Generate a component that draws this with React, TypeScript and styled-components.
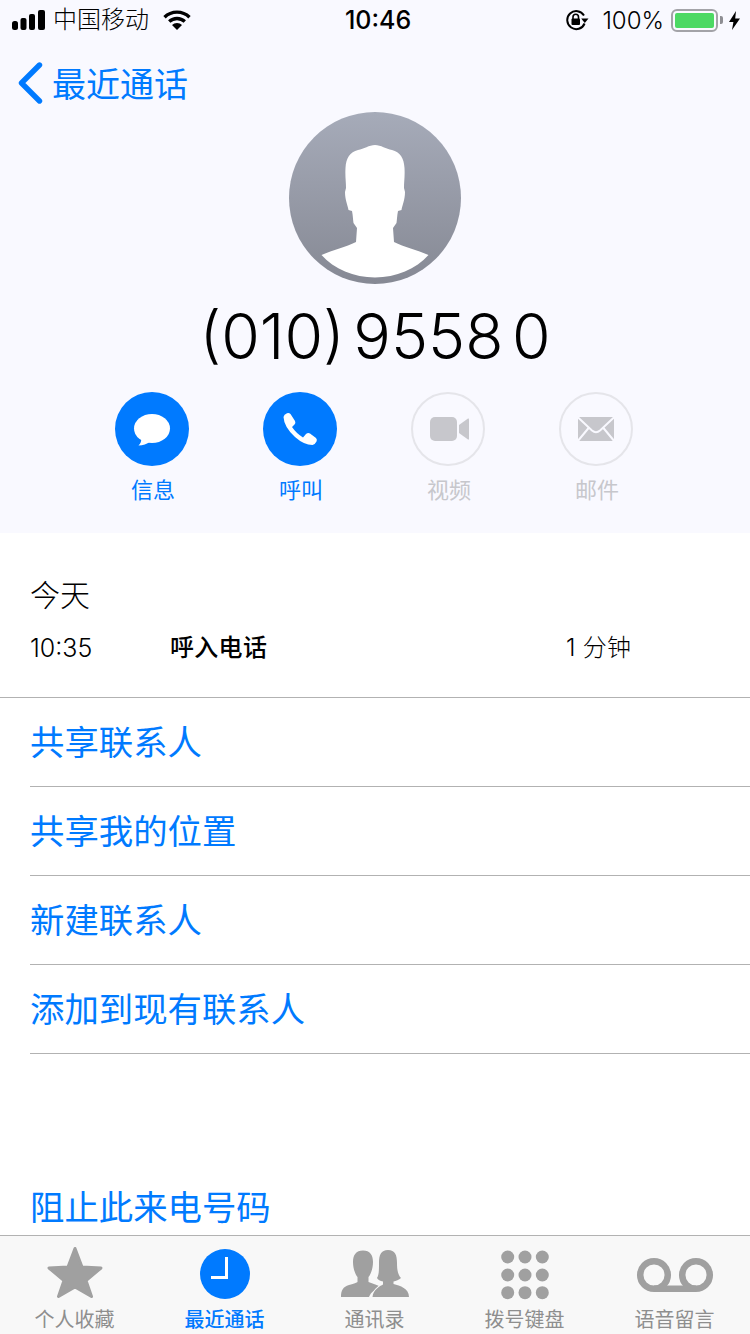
import React from 'react';
import styled, { createGlobalStyle } from 'styled-components';

const Global = createGlobalStyle`
  html, body { margin: 0; padding: 0; background: #fff; }
  body { font-family: Inter, "Noto Sans CJK SC", "Noto Sans", sans-serif; }
  * { box-sizing: border-box; }
`;

const BLUE = '#007aff';
const ICON_GREY = '#a0a0a0';

const Screen = styled.div`
  width: 750px;
  height: 1334px;
  display: flex;
  flex-direction: column;
  overflow: hidden;
  background: #fff;
  color: #000;
`;
const Main = styled.main`
  flex: 1;
  min-height: 0;
  overflow: hidden;
`;
const Header = styled.header`
  height: 533px;
  background: #f9f9ff;
  display: flex;
  flex-direction: column;
`;
const StatusBar = styled.div`
  height: 40px;
  display: grid;
  grid-template-columns: 1fr auto 1fr;
  align-items: center;
  padding: 0 10px 0 12px;
`;
const StatusLeft = styled.div`
  display: flex;
  align-items: center;
  gap: 8px;
  font-size: 24px;
  font-weight: 300;
`;
const Carrier = styled.span`
  margin-right: 6px;
  line-height: 40px;
`;
const Clock = styled.div`
  font-size: 25px;
  font-weight: 500;
  padding-left: 4px;
`;
const StatusRight = styled.div`
  display: flex;
  align-items: center;
  justify-content: flex-end;
  font-size: 24px;
  font-weight: 300;
`;
const Percent = styled.span`
  margin: 0 7px 0 13px;
`;
const Battery = styled.div`
  width: 47px;
  height: 23px;
  border: 2px solid #a3a3a8;
  border-radius: 6px;
  padding: 2px;
  display: flex;
`;
const BatteryFill = styled.div`
  flex: 1;
  background: #4cd964;
  border-radius: 2px;
`;
const BatteryNub = styled.div`
  width: 3px;
  height: 8px;
  background: #8e8e93;
  border-radius: 0 2px 2px 0;
  margin: 0 6px 0 2px;
`;
const NavBar = styled.div`
  height: 72px;
  padding: 13px 0 0 18px;
  display: flex;
  align-items: center;
  gap: 9px;
  color: ${BLUE};
  font-size: 34px;
  font-weight: 400;
`;
const Avatar = styled.div`
  display: flex;
  justify-content: center;
  height: 172px;
`;
const Phone = styled.h1`
  margin: 7px 0 0;
  text-align: center;
  font-size: 62.5px;
  line-height: 90px;
  font-weight: 300;
  word-spacing: -9px;
`;
const Actions = styled.div`
  margin-top: 11px;
  padding-right: 2px;
  display: flex;
  justify-content: center;
  gap: 74px;
`;
const Action = styled.div<{ $on?: boolean }>`
  width: 74px;
  display: flex;
  flex-direction: column;
  align-items: center;
  font-size: 22px;
  font-weight: 400;
  line-height: 32px;
  white-space: nowrap;
  color: ${(p) => (p.$on ? BLUE : '#c7c7cc')};
`;
const ActionLabel = styled.span`
  margin-left: 2px;
`;
const ActionCircle = styled.div<{ $on?: boolean }>`
  width: 74px;
  height: 74px;
  border-radius: 50%;
  background: ${(p) => (p.$on ? BLUE : 'transparent')};
  border: ${(p) => (p.$on ? 'none' : '2px solid #e5e5ea')};
  margin-bottom: 8px;
  display: flex;
  align-items: center;
  justify-content: center;
`;
const History = styled.section`
  height: 165px;
  padding: 41px 30px 0;
  border-bottom: 1px solid #b2b2b2;
`;
const Day = styled.div`
  font-size: 30px;
  line-height: 42px;
  font-weight: 300;
`;
const CallRow = styled.div`
  margin-top: 17px;
  display: grid;
  grid-template-columns: 140px 396px auto;
  font-size: 24px;
  line-height: 30px;
  font-weight: 300;
`;
const CallTime = styled.span`
  font-size: 25px;
`;
const CallType = styled.span`
  font-weight: 500;
  letter-spacing: 0.3px;
`;
const Duration = styled.span`
  letter-spacing: 0.3px;
`;
const Rows = styled.ul`
  list-style: none;
  margin: 0;
  padding: 0 0 0 30px;
`;
const Row = styled.li`
  height: 89px;
  border-bottom: 1px solid #b2b2b2;
  color: ${BLUE};
  font-size: 34.4px;
  font-weight: 400;
  display: flex;
  align-items: center;
  padding-bottom: 4px;
`;
const Block = styled.div`
  margin-top: 129px;
  padding-left: 30px;
  color: ${BLUE};
  font-size: 34.4px;
  font-weight: 400;
  line-height: 50px;
`;
const TabBar = styled.nav`
  height: 99px;
  flex: none;
  background: #f8f8f8;
  border-top: 1px solid #b2b2b2;
  display: grid;
  grid-template-columns: repeat(5, 150px);
`;
const Tab = styled.div<{ $on?: boolean }>`
  display: flex;
  flex-direction: column;
  align-items: center;
  color: ${(p) => (p.$on ? BLUE : '#8e8e8e')};
  font-size: 20px;
  font-weight: ${(p) => (p.$on ? 500 : 400)};
  line-height: 28px;
`;
const TabLabel = styled.span`
  margin-right: 1px;
`;
const TabIcon = styled.svg`
  display: block;
  width: 90px;
  height: 70px;
`;

const Signal = () => (
  <svg width="33" height="20" viewBox="0 0 33 20" fill="#000">
    <rect x="0" y="11" width="6" height="9" rx="2.5" />
    <rect x="8.5" y="8" width="6" height="12" rx="2" />
    <rect x="17" y="4" width="6" height="16" rx="2" />
    <rect x="26" y="0" width="7" height="20" rx="2" />
  </svg>
);
const Wifi = () => (
  <svg width="28" height="20" viewBox="0 0 28 20" fill="none" stroke="#000" strokeWidth="3.4">
    <path d="M1.5 7.2 A18 18 0 0 1 26.5 7.2" />
    <path d="M6.2 11.6 A11.5 11.5 0 0 1 21.8 11.6" />
    <path d="M14 20 L9 15 A7 7 0 0 1 19 15 Z" fill="#000" stroke="none" />
  </svg>
);
const OrientationLock = () => (
  <svg width="24" height="22" viewBox="0 0 24 22">
    <path d="M19.6 14.5 A9 9 0 1 1 19 6.5" fill="none" stroke="#000" strokeWidth="2" />
    <path d="M16.2 9.5 L23.5 9.5 L19.8 14 Z" fill="#000" />
    <rect x="6.5" y="9.5" width="8.5" height="6.5" rx="1" fill="#000" />
    <path d="M8 10 V8 A2.7 2.7 0 0 1 13.5 8 V10" fill="none" stroke="#000" strokeWidth="1.6" />
  </svg>
);
const Bolt = () => (
  <svg width="11" height="19" viewBox="0 0 11 19" fill="#000">
    <path d="M7 0 L0 11 L4.4 11 L3 19 L11 7.5 L6.2 7.5 Z" />
  </svg>
);
const Back = () => (
  <svg width="25" height="42" viewBox="0 0 25 42" fill="none" stroke={BLUE} strokeWidth="5.4" strokeLinecap="round" strokeLinejoin="round">
    <path d="M21.5 3 L3.5 21 L21.5 39" />
  </svg>
);
const Person = () => (
  <svg width="172" height="172" viewBox="0 0 172 172">
    <defs>
      <linearGradient id="av" x1="0" y1="0" x2="0" y2="1">
        <stop offset="0" stopColor="#a6abb9" />
        <stop offset="1" stopColor="#868994" />
      </linearGradient>
    </defs>
    <circle cx="86" cy="86" r="86" fill="url(#av)" />
    <path
      fill="#fff"
      d="M86 33 C92 33 97 37 103 38 C111 40 115 46 115.500 56 C116 64 115 70 115 76 L116 80 C116 88 113 94 112.500 98 L109 99 C108 104 108 108 107.500 111 L104 116 L105 130 C115 135 128 138 139.500 143 C127 157 107 165.500 86 165.500 C65 165.500 45 157 32.500 143 C44 138 57 135 67 130 L68 116 L64.500 111 C64 108 64 104 63 99 L59.500 98 C59 94 56 88 56 80 L57 76 C57 70 56 64 56.500 56 C57 46 61 40 69 38 C75 37 80 33 86 33 Z"
    />
  </svg>
);
const Bubble = () => (
  <svg width="74" height="74" viewBox="0 0 74 74" fill="#fff">
    <ellipse cx="37" cy="36.500" rx="18" ry="14.500" />
    <path d="M26.500 45 C26.500 49 25.500 52 23.500 53.500 C28 53.500 32 52 35 49.500 Z" />
  </svg>
);
const Handset = () => (
  <svg width="74" height="74" viewBox="0 0 74 74" fill="#fff">
    <path d="M20.500 25 Q21 22.500 24 21.300 Q26 20.600 27.500 22 L32 29 Q33 31 31.500 32.500 L29 35 Q33 41 40 45.500 L43 42 Q45 40.500 47 41.500 L53 46 Q54.500 47.500 53.500 49.500 Q52 52.500 49.500 53 Q41 53 32 45 Q21 35 20.500 25 Z" />
  </svg>
);
const Video = () => (
  <svg width="70" height="70" viewBox="2 2 70 70" fill="#c7c7cc">
    <rect x="19" y="25" width="27" height="24" rx="5" />
    <path d="M48 33 L57 26.500 Q58 26 58 27.500 V46.500 Q58 48 57 47.500 L48 41 Z" />
  </svg>
);
const Mail = () => (
  <svg width="70" height="70" viewBox="2 2 70 70">
    <rect x="19" y="25" width="36" height="24" fill="#c7c7cc" />
    <path d="M17.500 24 L33 38.500 Q37 42 41 38.500 L56.500 24" fill="none" stroke="#f9f9ff" strokeWidth="2" />
    <path d="M18 50 L30 35.500 M56 50 L44 35.500" fill="none" stroke="#f9f9ff" strokeWidth="2" />
  </svg>
);

const StarIcon = () => (
  <TabIcon viewBox="0 0 90 70">
    <path
      fill={ICON_GREY}
      stroke={ICON_GREY}
      strokeWidth="3"
      strokeLinejoin="round"
      d="M45 12.500 L52 31 L71 32 L56 44.500 L61.500 60.500 L45 51 L28.500 60.500 L34 44.500 L19 32 L38 31 Z"
    />
  </TabIcon>
);
const ClockIcon = () => (
  <TabIcon viewBox="0 0 90 70">
    <circle cx="45" cy="38" r="25" fill={BLUE} />
    <path d="M46.500 21 V41.500 H31" fill="none" stroke="#fff" strokeWidth="3" />
  </TabIcon>
);
const ContactsIcon = () => (
  <TabIcon viewBox="0 0 90 70">
    <path
      fill={ICON_GREY}
      d="M33 14.500 C40 14.500 43 19 43 26 C43 32 41 38 38.500 41 L38.500 46 C43 48 48 49 51 51 C45 53 41 56 39 61 L11 61 C11 54 13 51 19 49 C23 48 26 47 27.500 46 L27.500 41 C25 38 23 32 23 26 C23 19 26 14.500 33 14.500 Z"
    />
    <path
      fill={ICON_GREY}
      stroke="#f8f8f8"
      strokeWidth="2"
      paintOrder="stroke"
      d="M58 14 C65 14 67 19 67 27 C67 34 68 39 71 42 C69 44 66 45 63.500 45.500 L63.500 48 C70 50 79 52 79 61 L42.500 61 C43 54 50 50 53 48.500 L53 45.500 C50 45 48 44 47 42 C49 39 49 34 49 27 C49 19 51 14 58 14 Z"
    />
  </TabIcon>
);
const KeypadIcon = () => (
  <TabIcon viewBox="0 0 90 70">
    {[27.700, 45, 62.300].flatMap((x) =>
      [21, 39, 56.700].map((y) => <circle key={`${x}-${y}`} cx={x} cy={y} r="6.500" fill={ICON_GREY} />)
    )}
  </TabIcon>
);
const VoicemailIcon = () => (
  <TabIcon viewBox="0 0 90 70">
    <g fill="none" stroke={ICON_GREY} strokeWidth="6.500">
      <circle cx="24" cy="39" r="13.800" />
      <circle cx="66" cy="39" r="13.800" />
      <path d="M24 52.800 H66" />
    </g>
  </TabIcon>
);

const actions = [
  { label: '信息', on: true, icon: <Bubble /> },
  { label: '呼叫', on: true, icon: <Handset /> },
  { label: '视频', on: false, icon: <Video /> },
  { label: '邮件', on: false, icon: <Mail /> },
];
const rows = ['共享联系人', '共享我的位置', '新建联系人', '添加到现有联系人'];
const tabs = [
  { label: '个人收藏', icon: <StarIcon /> },
  { label: '最近通话', icon: <ClockIcon />, on: true },
  { label: '通讯录', icon: <ContactsIcon /> },
  { label: '拨号键盘', icon: <KeypadIcon /> },
  { label: '语音留言', icon: <VoicemailIcon /> },
];

export default function App() {
  return (
    <Screen>
      <Global />
      <Main>
        <Header>
          <StatusBar>
            <StatusLeft>
              <Signal />
              <Carrier>中国移动</Carrier>
              <Wifi />
            </StatusLeft>
            <Clock>10:46</Clock>
            <StatusRight>
              <OrientationLock />
              <Percent>100%</Percent>
              <Battery>
                <BatteryFill />
              </Battery>
              <BatteryNub />
              <Bolt />
            </StatusRight>
          </StatusBar>
          <NavBar>
            <Back />
            最近通话
          </NavBar>
          <Avatar>
            <Person />
          </Avatar>
          <Phone>(010) 9558 0</Phone>
          <Actions>
            {actions.map((a) => (
              <Action key={a.label} $on={a.on}>
                <ActionCircle $on={a.on}>{a.icon}</ActionCircle>
                <ActionLabel>{a.label}</ActionLabel>
              </Action>
            ))}
          </Actions>
        </Header>
        <History>
          <Day>今天</Day>
          <CallRow>
            <CallTime>10:35</CallTime>
            <CallType>呼入电话</CallType>
            <Duration>1 分钟</Duration>
          </CallRow>
        </History>
        <Rows>
          {rows.map((r) => (
            <Row key={r}>{r}</Row>
          ))}
        </Rows>
        <Block>阻止此来电号码</Block>
      </Main>
      <TabBar>
        {tabs.map((t) => (
          <Tab key={t.label} $on={t.on}>
            {t.icon}
            <TabLabel>{t.label}</TabLabel>
          </Tab>
        ))}
      </TabBar>
    </Screen>
  );
}
